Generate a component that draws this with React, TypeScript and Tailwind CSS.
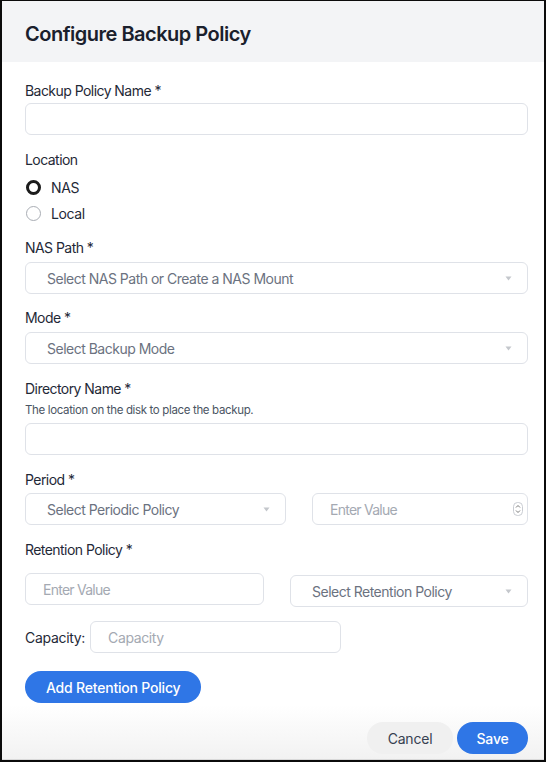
import React from 'react';

// Small caret used by the fake selects
const Caret: React.FC = () => (
    <svg width="7" height="5" viewBox="0 0 7 5" className="shrink-0">
        <path d="M0.5 0.5 L6.5 0.5 L3.5 4.5 Z" fill="#c4c7cc" />
    </svg>
);

const SelectBox: React.FC<{ placeholder: string; className?: string }> = ({ placeholder, className = '' }) => (
    <div className={`h-8 flex items-center justify-between pl-[21px] pr-[15px] border border-[#dfe2e8] rounded-md bg-white ${className}`}>
        <span className="text-[14px] text-[#6b7280] tracking-[-0.5px]">{placeholder}</span>
        <Caret />
    </div>
);

const TextBox: React.FC<{ placeholder?: string; className?: string; spinner?: boolean }> = ({ placeholder, className = '', spinner }) => (
    <div className={`h-8 flex items-center justify-between pl-[17px] pr-[4px] border border-[#dfe2e8] rounded-md bg-white ${className}`}>
        <span className="text-[14px] text-[#a4a9b2] tracking-[-0.75px]">{placeholder}</span>
        {spinner && (
            <svg width="10" height="14" viewBox="0 0 10 14">
                <rect x="0.5" y="0.5" width="9" height="13" rx="4" fill="white" stroke="#c9ccd2" />
                <path d="M3 5.5 L5 3.5 L7 5.5" stroke="#777" strokeWidth="1" fill="none" />
                <path d="M3 8.5 L5 10.5 L7 8.5" stroke="#777" strokeWidth="1" fill="none" />
            </svg>
        )}
    </div>
);

const Label: React.FC<{ children: React.ReactNode; className?: string }> = ({ children, className = '' }) => (
    <div className={`text-[14px] leading-5 text-[#1f2937] tracking-[-0.55px] ${className}`}>{children}</div>
);

const App: React.FC = () => {
    return (
        <div className="w-[546px] h-[762px] bg-white border-x-2 border-t border-b-2 border-[#0b0b0b] flex flex-col font-['Inter','Liberation_Sans',sans-serif] overflow-hidden">
            {/* Header */}
            <div className="h-[61px] bg-[#f3f4f6] flex items-center pl-[23px] shrink-0">
                <h1 className="text-[20px] font-semibold text-[#1a202c] tracking-[-0.5px] pt-1">Configure Backup Policy</h1>
            </div>

            {/* Body */}
            <div className="flex-1 pl-[23px] pr-[16px] pt-[19px]">
                <Label>Backup Policy Name *</Label>
                <TextBox className="mt-0.5" />

                <Label className="mt-[15px]">Location</Label>
                <div className="mt-[4px] flex flex-col">
                    <div className="h-[26px] flex items-center gap-[10px]">
                        <span className="w-[15px] h-[15px] rounded-full border-[3px] border-[#1c1c1c] ml-px" />
                        <span className="text-[14px] text-[#1f2937] tracking-[-0.4px]">NAS</span>
                    </div>
                    <div className="h-[26px] flex items-center gap-[10px]">
                        <span className="w-[15px] h-[15px] rounded-full border border-[#a9adb4] ml-px" />
                        <span className="text-[14px] text-[#1f2937] tracking-[-0.4px]">Local</span>
                    </div>
                </div>

                <Label className="mt-[12px]">NAS Path *</Label>
                <SelectBox className="mt-1" placeholder="Select NAS Path or Create a NAS Mount" />

                <Label className="mt-[14px]">Mode *</Label>
                <SelectBox className="mt-1" placeholder="Select Backup Mode" />

                <Label className="mt-[15px]">Directory Name *</Label>
                <div className="text-[11.5px] leading-4 text-[#4b5563] mt-[3px] tracking-[-0.35px]">The location on the disk to place the backup.</div>
                <TextBox className="mt-[5px]" />

                <Label className="mt-[15px]">Period *</Label>
                <div className="mt-[3px] flex gap-[26px]">
                    <SelectBox className="w-[261px]" placeholder="Select Periodic Policy" />
                    <TextBox className="flex-1" placeholder="Enter Value" spinner />
                </div>

                <Label className="mt-[15px]">Retention Policy *</Label>
                <div className="mt-[13px] flex gap-[26px] items-start">
                    <TextBox className="w-[239px]" placeholder="Enter Value" />
                    <SelectBox className="flex-1 mt-[2px]" placeholder="Select Retention Policy" />
                </div>

                <div className="mt-[14px] flex items-center gap-[5px]">
                    <span className="text-[14px] text-[#1f2937] tracking-[-0.3px]">Capacity:</span>
                    <div className="w-[251px] h-8 flex items-center pl-[17px] border border-[#dfe2e8] rounded-md">
                        <span className="text-[14px] text-[#a4a9b2] tracking-[-0.4px]">Capacity</span>
                    </div>
                </div>

                <button className="mt-[18px] h-8 px-[21px] rounded-full bg-[#2f76e6] text-white text-[14px] font-medium tracking-[-0.2px]">
                    Add Retention Policy
                </button>
            </div>

            {/* Footer */}
            <div className="h-[55px] shrink-0 flex items-start justify-end gap-[4px] pr-[16px] pt-[17px] bg-gradient-to-b from-white to-[#f2f2f2] border-b border-[#d9d9d9]">
                <button className="h-8 w-[86px] rounded-full bg-[#f0f0f0] text-[#374151] text-[14px] tracking-[-0.2px]">Cancel</button>
                <button className="h-8 w-[71px] rounded-full bg-[#2f76e6] text-white text-[14px] font-medium tracking-[-0.2px]">Save</button>
            </div>
        </div>
    );
};

export default App;
